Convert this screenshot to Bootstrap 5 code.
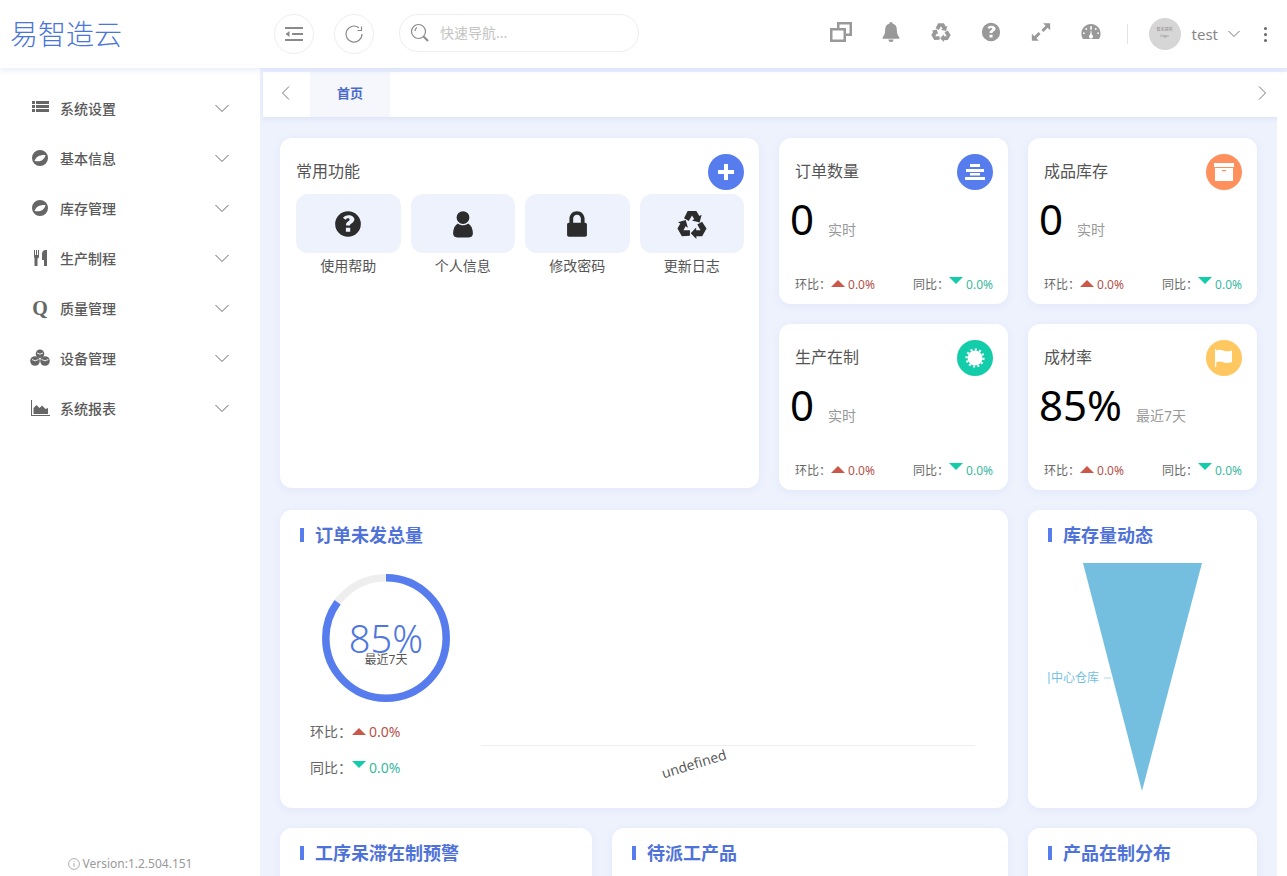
<!DOCTYPE html>
<html lang="zh-CN">
<head>
<meta charset="utf-8">
<title>易智造云</title>
<link href="https://cdn.jsdelivr.net/npm/bootstrap@5.3.0/dist/css/bootstrap.min.css" rel="stylesheet">
<style>
html,body{height:100%;overflow:hidden}
body{background:#eef2fd;font-family:"Noto Sans","Noto Sans CJK SC",sans-serif;color:#555}
.shell{height:876px}
.topbar{height:68px;flex:none;background:#fff;box-shadow:0 2px 5px rgba(90,120,220,.14);position:relative;z-index:3;padding-left:10px}
.logo-text{width:264px;font-size:28px;font-weight:300;color:#4a76d9;line-height:1}
.round-btn{width:40px;height:40px;border:1px solid #eee;border-radius:50%;background:#fff;margin-right:20px}
.search-pill{width:240px;height:38px;border:1px solid #eee;border-radius:19px;margin-left:5px;padding-left:10px;gap:10px;font-size:14px;color:#c4c4c4;margin-top:-3px}
.tool-ico{width:24px;height:24px;padding:2px;fill:#999;margin:-4px 26px 0 0;display:block}
.tool-first{padding:0}
.vbar{width:1px;height:20px;background:#e3e3e3;margin:0 21px 0 -2px}
.avatar{width:32px;height:32px;border-radius:50%;background:#d6d6d6;margin-right:11px;color:#888;font-size:4px;line-height:6px;text-align:center;padding-top:9px}
.user-name{font-size:15px;color:#888;margin-right:10px}
.kebab{margin:0 20px 0 24px;gap:3px}
.kebab i{display:block;width:3px;height:3px;border-radius:50%;background:#666}
.side{width:260px;background:#fff;padding-top:15px;flex:none}
.side-item{height:50px;border:0;padding:0 31px 0 30px;background:transparent;font-size:14px;font-weight:500;color:#5a5a5a}
.side-ico{width:20px;height:20px;margin-right:10px;fill:#666;flex:none;display:block}
.q-ico{width:20px;margin-right:10px;font-family:"Liberation Serif",serif;font-weight:700;font-size:20px;line-height:20px;text-align:center;color:#666}
.ver{font-size:12px;color:#999;gap:3px;padding-bottom:3px}
.rightpane{min-width:0}
.tabbar{height:45px;margin:4px 0 0 3px;background:#fff;box-shadow:0 2px 5px rgba(90,120,220,.12);flex:none}
.tab-arrow{width:47px;padding:0 2px 3px 0}
.tab-on{width:80px;height:45px;background:#f5f7fd;color:#4a6bc8;font-size:13px;font-weight:700;padding-bottom:2px}
.tab-next{margin:0 20px 3px 0}
.strip{width:10px;background:#fff;flex:none}
.board{display:grid;grid-template-columns:312px 147px 229px 229px;grid-template-rows:166px 166px 298px 200px;gap:20px;padding:21px 20px 0 20px;align-content:start;overflow:hidden}
.panel{border:0;border-radius:12px;background:#fff;box-shadow:0 2px 8px rgba(90,120,220,.08)}
.span-main{grid-column:1/3;grid-row:1/3;height:350px;padding:16px 15px 16px 16px}
.span-wide{grid-column:1/4}
.span-mid{grid-column:2/4}
.st-title{font-size:16px;line-height:34px;color:#555;margin-bottom:2px}
.icon-disc{width:36px;height:36px;border-radius:50%;display:flex;align-items:center;justify-content:center;flex:none}
.icon-disc svg{display:block;fill:#fff}
.disc-blue{background:#567cee}
.disc-orange{background:#fe905e}
.disc-teal{background:#13cdaa}
.disc-yellow{background:#ffc75f}
.tile{flex:1 1 0;text-align:center;font-size:14px;color:#555;line-height:20px}
.tile-box{height:59px;border-radius:12px;background:#edf2fd;margin-bottom:3px}
.tile-box svg{width:28px;height:28px;fill:#2c2c2c;display:block}
.tile-box .rc-big{width:30px;height:30px}
.stat{padding:16px 15px 0 16px}
.stat-num{font-size:42px;line-height:52px;color:#000;margin:3px 0 0 -5px;font-weight:400}
.stat-sub{font-size:14px;color:#999;margin-left:14px;padding-bottom:5px}
.stat-foot{font-size:12px;color:#666;margin-top:31px;line-height:18px}
.tri-up,.tri-dn{display:inline-block;width:0;height:0;border-left:7px solid transparent;border-right:7px solid transparent;margin:0 3px 0 0}
.tri-up{border-bottom:7px solid #c9584a;vertical-align:2px}
.tri-dn{border-top:7px solid #13cdaa;vertical-align:5px}
.val-up{color:#b5524a}
.val-dn{color:#3ab8a0}
.sec-head{font-size:18px;font-weight:700;color:#4f72d9;line-height:26px;padding:12px 0 0 20px;gap:11px}
.sec-bar{width:4px;height:14px;background:#567cee;flex:none}
.ring-col{width:200px;flex:none;padding:26px 0 0 30px}
.ring-wrap{width:128px;height:128px;margin:0 0 0 12px;position:relative}
.ring-wrap svg{display:block}
.ring-center{position:absolute;inset:0;padding-top:49px;text-align:center}
.ring-pct{font-size:38px;line-height:30px;color:#4f77df;font-weight:300}
.ring-sub{font-size:12px;line-height:14px;color:#555}
.ring-stat{font-size:14px;color:#666;line-height:20px}
.ring-gap{margin-top:16px}
.chart-zone{padding:197px 33px 0 1px}
.axis-line{height:1px;background:#eee}
.axis-label{font-size:14px;color:#555;transform:rotate(-17deg);margin:9px 68px 0 0;text-align:center;line-height:18px;font-family:"Open Sans",sans-serif}
.funnel{display:block;margin:13px 0 0 20px}
</style>
</head>
<body>
<svg width="0" height="0" class="d-block">
  <defs>
    <symbol id="i-recycle" viewBox="0 0 24 24">
      <path id="rc-a" d="M8.500 1.600h7l2.400 4 1.800-1.100-1.600 6.200-6.200-1.500 1.900-1.100-1.800-3-2.600 4.500-3.800-2.200z"/>
      <use href="#rc-a" transform="rotate(120 12 13)"/>
      <use href="#rc-a" transform="rotate(240 12 13)"/>
    </symbol>
    <symbol id="i-help" viewBox="0 0 24 24">
      <path fill-rule="evenodd" d="M12 1a11 11 0 1 0 0 22 11 11 0 0 0 0-22zm1.900 17.600h-3.700v-3.400h3.700zm2.800-8.800c-.4.800-1.200 1.300-2 1.900-.7.400-1 .8-1 1.600h-3.400c-.1-1.800.5-2.800 1.700-3.500.8-.5 1.400-.9 1.400-1.600 0-.7-.6-1.100-1.400-1.100-.9 0-1.600.5-2.200 1.300L7.700 6.700C8.800 5.200 10.400 4.400 12.500 4.400c3 0 5 1.700 5 3.700 0 .6-.3 1.200-.8 1.700z"/>
    </symbol>
  </defs>
</svg>
<div class="shell d-flex flex-column">
  <header class="topbar d-flex align-items-center">
    <div class="logo-text">易智造云</div>
    <div class="round-btn d-flex align-items-center justify-content-center">
      <svg width="20" height="20" viewBox="0 0 20 20" fill="#8a8a8a"><rect x="1" y="3" width="18" height="2"/><rect x="8" y="9" width="11" height="2"/><rect x="1" y="15" width="18" height="2"/><path d="M1.500 10l4-3v6z"/></svg>
    </div>
    <div class="round-btn d-flex align-items-center justify-content-center">
      <svg width="20" height="20" viewBox="0 0 20 20" fill="none" stroke="#8a8a8a" stroke-width="1.200"><path d="M15 3.800A8 8 0 1 0 18 10"/><path d="M17.500 2.500v4h-4" /></svg>
    </div>
    <div class="search-pill d-flex align-items-center">
      <svg width="20" height="20" viewBox="0 0 20 20" fill="none" stroke="#8a8a8a" stroke-width="1.200"><circle cx="8.500" cy="8.500" r="7"/><path d="M5 8a4 4 0 0 1 2-3.500"/><path d="M13.500 13.500l4.500 4.500" stroke-width="2"/></svg>
      <span>快速导航...</span>
    </div>
    <div class="ms-auto d-flex align-items-center">
      <svg class="tool-ico tool-first" viewBox="0 0 24 24"><path fill-rule="evenodd" d="M8 2h15v14h-6v6H1V8h7zm2.500 2.500V8H17v5.500h3.500v-9zM3.500 10.500v9h11v-9z"/></svg>
      <svg class="tool-ico" viewBox="0 0 24 24"><path d="M12 0a2 2 0 0 1 2 2.200c3.500.9 5 3.500 5 7 0 5 1.500 7 3 9v2H2v-2c1.500-2 3-4 3-9 0-3.500 1.500-6.100 5-7A2 2 0 0 1 12 0zM9 21h6a3 3 0 0 1-6 0z"/></svg>
      <svg class="tool-ico" viewBox="0 0 24 24"><use href="#i-recycle"/></svg>
      <svg class="tool-ico" viewBox="0 0 24 24"><use href="#i-help"/></svg>
      <svg class="tool-ico" viewBox="0 0 24 24"><path d="M14.500 1.500H23v8.500l-3-3-5 5-2.500-2.500 5-5zM9.500 22.500H1V14l3 3 5-5 2.500 2.500-5 5z"/></svg>
      <svg class="tool-ico" viewBox="0 0 24 24"><path fill-rule="evenodd" d="M12 2.500C5.600 2.500.5 7.600.5 14c0 2.200.6 4.200 1.700 6 .2.300.5.500.9.500h17.800c.4 0 .7-.2.900-.5 1.100-1.800 1.700-3.800 1.700-6 0-6.400-5.100-11.500-11.500-11.500zm-1 2.500h2v4h-2zM4.500 14.500h-2v-2h2zm1.800-4.700L4.900 8.400l1.400-1.400 1.400 1.400zM14.500 17.500a2.500 2.500 0 0 1-5 0c0-1 .6-1.900 1.400-2.300L12 9l1.100 6.200c.8.400 1.400 1.300 1.400 2.300zm3.200-7.700l-1.400-1.400 1.400-1.400 1.400 1.400zM21.500 14.500h-2v-2h2z"/></svg>
      <div class="vbar"></div>
      <div class="avatar">暂未提供<br>logo</div>
      <span class="user-name">test</span>
      <svg width="12" height="8" viewBox="0 0 12 8" fill="none" stroke="#777"><path d="M.500 1l5.500 5.500L11.500 1"/></svg>
      <div class="kebab d-flex flex-column"><i></i><i></i><i></i></div>
    </div>
  </header>
  <div class="d-flex flex-grow-1 overflow-hidden">
    <aside class="side d-flex flex-column">
      <ul class="list-group list-group-flush flex-grow-1">
        <li class="list-group-item side-item d-flex align-items-center"><svg class="side-ico" viewBox="0 0 20 20"><path d="M2 3h3v3H2zm4 0h13v3H6zM2 7h3v3H2zm4 0h13v3H6zM2 11h3v3H2zm4 0h13v3H6z"/></svg>系统设置<svg class="ms-auto" width="14" height="9" viewBox="0 0 14 9" fill="none" stroke="#666"><path d="M.500 1l6.500 6.500L13.500 1"/></svg></li>
        <li class="list-group-item side-item d-flex align-items-center"><svg class="side-ico" viewBox="0 0 20 20"><path fill-rule="evenodd" d="M10 2a8 8 0 1 0 0 16 8 8 0 0 0 0-16zM4.500 13C6 8.500 10 6.500 15.500 7 14.500 12 10 14.300 4.500 13z"/></svg>基本信息<svg class="ms-auto" width="14" height="9" viewBox="0 0 14 9" fill="none" stroke="#666"><path d="M.500 1l6.500 6.500L13.500 1"/></svg></li>
        <li class="list-group-item side-item d-flex align-items-center"><svg class="side-ico" viewBox="0 0 20 20"><path fill-rule="evenodd" d="M10 2a8 8 0 1 0 0 16 8 8 0 0 0 0-16zM4.500 13C6 8.500 10 6.500 15.500 7 14.500 12 10 14.300 4.500 13z"/></svg>库存管理<svg class="ms-auto" width="14" height="9" viewBox="0 0 14 9" fill="none" stroke="#666"><path d="M.500 1l6.500 6.500L13.500 1"/></svg></li>
        <li class="list-group-item side-item d-flex align-items-center"><svg class="side-ico" viewBox="0 0 20 20"><path d="M4 2h1v5h1V2h1v5h1V2h1v6.500c0 1-.6 1.800-1.500 2V18h-3v-7.500C4.600 10.300 4 9.500 4 8.500zM15.500 2H17v16h-3v-6h-2V6c0-2.500 1.500-4 3.500-4z"/></svg>生产制程<svg class="ms-auto" width="14" height="9" viewBox="0 0 14 9" fill="none" stroke="#666"><path d="M.500 1l6.500 6.500L13.500 1"/></svg></li>
        <li class="list-group-item side-item d-flex align-items-center"><span class="q-ico">Q</span>质量管理<svg class="ms-auto" width="14" height="9" viewBox="0 0 14 9" fill="none" stroke="#666"><path d="M.500 1l6.500 6.500L13.500 1"/></svg></li>
        <li class="list-group-item side-item d-flex align-items-center"><svg class="side-ico" viewBox="0 0 20 20"><circle cx="10" cy="5.800" r="4.300"/><circle cx="5" cy="13" r="4.800"/><circle cx="15" cy="13" r="4.800"/><path d="M7 5l3 1.200L13 5M2 11.500l3.200 1.300 3.300-1.300M11.500 11.500l3.500 1.300 3.300-1.300" fill="none" stroke="#fff" stroke-width=".9"/></svg>设备管理<svg class="ms-auto" width="14" height="9" viewBox="0 0 14 9" fill="none" stroke="#666"><path d="M.500 1l6.500 6.500L13.500 1"/></svg></li>
        <li class="list-group-item side-item d-flex align-items-center"><svg class="side-ico" viewBox="0 0 20 20"><path d="M1 2h1v15h18v1H1zM3.500 16V10l3-3 3 3 2.500-2.500 3.500 3.500 2.500-1V16z"/></svg>系统报表<svg class="ms-auto" width="14" height="9" viewBox="0 0 14 9" fill="none" stroke="#666"><path d="M.500 1l6.500 6.500L13.500 1"/></svg></li>
      </ul>
      <div class="ver d-flex justify-content-center align-items-center">
        <svg width="12" height="12" viewBox="0 0 12 12" fill="none" stroke="#999" stroke-width=".8"><circle cx="6" cy="6" r="5.400"/><path d="M6 5v4M6 3v1"/></svg>
        <span>Version:1.2.504.151</span>
      </div>
    </aside>
    <div class="rightpane flex-grow-1 d-flex flex-column">
      <div class="tabbar d-flex align-items-center">
        <div class="tab-arrow d-flex justify-content-center"><svg width="9" height="14" viewBox="0 0 9 14" fill="none" stroke="#777"><path d="M8 .500L1.500 7 8 13.500"/></svg></div>
        <div class="tab-on d-flex align-items-center justify-content-center">首页</div>
        <svg class="ms-auto tab-next" width="9" height="14" viewBox="0 0 9 14" fill="none" stroke="#777"><path d="M1 .500L7.500 7 1 13.500"/></svg>
      </div>
      <div class="d-flex flex-grow-1 overflow-hidden">
        <main class="board flex-grow-1">
          <section class="card panel span-main">
            <div class="d-flex justify-content-between align-items-center">
              <span class="st-title">常用功能</span>
              <span class="icon-disc disc-blue"><svg width="18" height="18" viewBox="0 0 18 18"><path d="M7 1h4v6h6v4h-6v6H7v-6H1V7h6z"/></svg></span>
            </div>
            <div class="d-flex mt-1" style="gap:10px">
              <div class="tile"><div class="tile-box d-flex align-items-center justify-content-center"><svg viewBox="0 0 24 24"><use href="#i-help"/></svg></div>使用帮助</div>
              <div class="tile"><div class="tile-box d-flex align-items-center justify-content-center"><svg viewBox="0 0 24 24"><path d="M12 1a5.500 5.500 0 1 1 0 11 5.500 5.500 0 0 1 0-11zM7.500 11.500c1.200 1 2.800 1.500 4.500 1.500s3.300-.5 4.500-1.500C19 13 20.500 16 20.500 20c0 2.500-1.500 3.500-3.500 3.500H7C5 23.500 3.500 22.500 3.500 20c0-4 1.500-7 4-8.500z"/></svg></div>个人信息</div>
              <div class="tile"><div class="tile-box d-flex align-items-center justify-content-center"><svg viewBox="0 0 24 24"><path fill-rule="evenodd" d="M12 1C8 1 5.500 4 5.500 7.500V11H5c-.8 0-1.500.7-1.500 1.500v9c0 .8.700 1.500 1.500 1.500h14c.8 0 1.500-.7 1.500-1.500v-9c0-.8-.7-1.500-1.500-1.500h-.5V7.500C18.500 4 16 1 12 1zm0 3c2 0 3.300 1.500 3.300 3.500V11H8.700V7.500C8.700 5.500 10 4 12 4z"/></svg></div>修改密码</div>
              <div class="tile"><div class="tile-box d-flex align-items-center justify-content-center"><svg class="rc-big" viewBox="0 0 24 24"><use href="#i-recycle"/></svg></div>更新日志</div>
            </div>
          </section>

          <section class="card panel stat">
            <div class="d-flex justify-content-between align-items-center"><span class="st-title">订单数量</span><span class="icon-disc disc-blue"><svg width="22" height="20" viewBox="0 0 22 20"><path d="M6 2h10v3H6zM2 7h18v3H2zM6 11h10v2.500H6zM1 15h20v3H1z"/></svg></span></div>
            <div class="d-flex align-items-end"><span class="stat-num">0</span><span class="stat-sub">实时</span></div>
            <div class="stat-foot d-flex justify-content-between"><span>环比：<i class="tri-up"></i><span class="val-up">0.0%</span></span><span>同比：<i class="tri-dn"></i><span class="val-dn">0.0%</span></span></div>
          </section>
          <section class="card panel stat">
            <div class="d-flex justify-content-between align-items-center"><span class="st-title">成品库存</span><span class="icon-disc disc-orange"><svg width="22" height="20" viewBox="0 0 22 20"><path fill-rule="evenodd" d="M1 1h20v4H1zM2 6h18v13H2zM9 8v1.200h4V8z"/></svg></span></div>
            <div class="d-flex align-items-end"><span class="stat-num">0</span><span class="stat-sub">实时</span></div>
            <div class="stat-foot d-flex justify-content-between"><span>环比：<i class="tri-up"></i><span class="val-up">0.0%</span></span><span>同比：<i class="tri-dn"></i><span class="val-dn">0.0%</span></span></div>
          </section>
          <section class="card panel stat">
            <div class="d-flex justify-content-between align-items-center"><span class="st-title">生产在制</span><span class="icon-disc disc-teal"><svg width="20" height="20" viewBox="0 0 20 20"><circle cx="10" cy="10" r="7.500"/><g stroke="#fff" stroke-width="2.200" stroke-dasharray="2 2.400"><circle cx="10" cy="10" r="8.500" fill="none"/></g></svg></span></div>
            <div class="d-flex align-items-end"><span class="stat-num">0</span><span class="stat-sub">实时</span></div>
            <div class="stat-foot d-flex justify-content-between"><span>环比：<i class="tri-up"></i><span class="val-up">0.0%</span></span><span>同比：<i class="tri-dn"></i><span class="val-dn">0.0%</span></span></div>
          </section>
          <section class="card panel stat">
            <div class="d-flex justify-content-between align-items-center"><span class="st-title">成材率</span><span class="icon-disc disc-yellow"><svg width="22" height="22" viewBox="0 0 22 22"><path d="M2 2a1 1 0 0 1 1.300 1v.500c2.500-1.300 5-.8 7.500.2 2.500 1 5 .8 8.200-.2v11.500c-3 1.200-5.500 1.500-8.200.5-2.700-1-5-1.300-7.500-.3V20H2z"/></svg></span></div>
            <div class="d-flex align-items-end"><span class="stat-num">85%</span><span class="stat-sub">最近7天</span></div>
            <div class="stat-foot d-flex justify-content-between"><span>环比：<i class="tri-up"></i><span class="val-up">0.0%</span></span><span>同比：<i class="tri-dn"></i><span class="val-dn">0.0%</span></span></div>
          </section>

          <section class="card panel span-wide">
            <div class="sec-head d-flex align-items-center"><i class="sec-bar"></i>订单未发总量</div>
            <div class="d-flex flex-grow-1">
              <div class="ring-col">
                <div class="ring-wrap">
                  <svg width="128" height="128" viewBox="0 0 128 128"><circle cx="64" cy="64" r="60.200" fill="none" stroke="#eeeeee" stroke-width="7.500"/><circle cx="64" cy="64" r="60.200" fill="none" stroke="#567cee" stroke-width="7.500" stroke-dasharray="321.500 378.300" transform="rotate(-90 64 64)"/></svg>
                  <div class="ring-center"><div class="ring-pct">85%</div><div class="ring-sub">最近7天</div></div>
                </div>
                <div class="ring-stat mt-3 pt-1">环比：<i class="tri-up"></i><span class="val-up">0.0%</span></div>
                <div class="ring-stat ring-gap">同比：<i class="tri-dn"></i><span class="val-dn">0.0%</span></div>
              </div>
              <div class="chart-zone flex-grow-1">
                <div class="axis-line"></div>
                <div class="axis-label">undefined</div>
              </div>
            </div>
          </section>
          <section class="card panel">
            <div class="sec-head d-flex align-items-center"><i class="sec-bar"></i>库存量动态</div>
            <svg class="funnel" width="200" height="232" viewBox="0 0 200 232">
              <polygon points="35,2 154,2 94,230" fill="#74bfdf"/>
              <rect x="0" y="111" width="2" height="12" fill="#b5dfee"/>
              <text x="51" y="121" text-anchor="end" font-size="12" fill="#74bfdf" font-family="Noto Sans CJK SC, sans-serif">中心仓库</text>
              <path d="M56 117h7" stroke="#a9d8ea"/>
            </svg>
          </section>

          <section class="card panel"><div class="sec-head d-flex align-items-center"><i class="sec-bar"></i>工序呆滞在制预警</div></section>
          <section class="card panel span-mid"><div class="sec-head d-flex align-items-center"><i class="sec-bar"></i>待派工产品</div></section>
          <section class="card panel"><div class="sec-head d-flex align-items-center"><i class="sec-bar"></i>产品在制分布</div></section>
        </main>
        <div class="strip"></div>
      </div>
    </div>
  </div>
</div>
<script src="https://cdn.jsdelivr.net/npm/bootstrap@5.3.0/dist/js/bootstrap.bundle.min.js"></script>
</body>
</html>
